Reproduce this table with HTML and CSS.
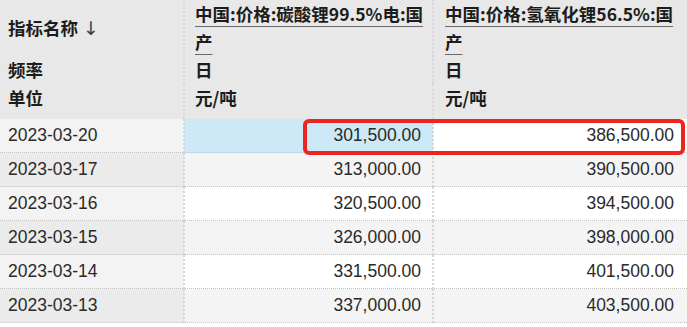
FILE: index.html
```html
<!DOCTYPE html>
<html lang="zh">
<head>
<meta charset="utf-8">
<link rel="stylesheet" href="styles.css">
</head>
<body>
<div class="wrap">
  <table class="grid">
    <colgroup>
      <col class="c1">
      <col class="c2">
      <col class="c3">
    </colgroup>
    <thead>
      <tr class="h-title">
        <th class="lbl">指标名称 <span class="arrow">↓</span></th>
        <th class="col"><span class="link">中国:价格:碳酸锂99.5%电:国产</span></th>
        <th class="col"><span class="link">中国:价格:氢氧化锂56.5%:国产</span></th>
      </tr>
      <tr class="h-freq">
        <th class="lbl">频率</th>
        <th class="col">日</th>
        <th class="col">日</th>
      </tr>
      <tr class="h-unit">
        <th class="lbl">单位</th>
        <th class="col">元/吨</th>
        <th class="col">元/吨</th>
      </tr>
    </thead>
    <tbody>
      <tr><td class="date">2023-03-20</td><td class="num sel">301,500.00</td><td class="num">386,500.00</td></tr>
      <tr><td class="date">2023-03-17</td><td class="num">313,000.00</td><td class="num">390,500.00</td></tr>
      <tr><td class="date">2023-03-16</td><td class="num">320,500.00</td><td class="num">394,500.00</td></tr>
      <tr><td class="date">2023-03-15</td><td class="num">326,000.00</td><td class="num">398,000.00</td></tr>
      <tr><td class="date">2023-03-14</td><td class="num">331,500.00</td><td class="num">401,500.00</td></tr>
      <tr><td class="date">2023-03-13</td><td class="num">337,000.00</td><td class="num">403,500.00</td></tr>
    </tbody>
  </table>
  <div class="mark"></div>
</div>
</body>
</html>
```
FILE: styles.css
```css
html, body {
  margin: 0;
  padding: 0;
  background: #ffffff;
}
.wrap {
  position: relative;
  width: 687px;
  height: 327px;
  overflow: hidden;
}
.grid {
  border-collapse: collapse;
  table-layout: fixed;
  width: 687px;
}
.c1 { width: 184px; }
.c2 { width: 249px; }
.c3 { width: 254px; }

thead th {
  background: #e8e8e8;
  font-family: "Noto Sans CJK SC", sans-serif;
  font-weight: 700;
  font-size: 17.5px;
  color: #1c1c1c;
  text-align: left;
  vertical-align: top;
  padding: 0;
  line-height: 28px;
}
thead th + th {
  border-left: 2px dotted #d9d9d9;
}
thead th.lbl { padding-left: 8px; }
thead th.col { padding-left: 10px; padding-right: 8px; }
thead th:nth-child(3).col { padding-left: 11px; }

.h-title th { height: 56px; }
.h-title th.lbl { vertical-align: middle; }
.h-freq th { height: 28px; }
.h-freq th.lbl { vertical-align: middle; line-height: 24px; }
.h-unit th { height: 35px; }

.link {
  text-decoration: underline;
  text-decoration-color: #6a6a6a;
  text-decoration-thickness: 1px;
  text-underline-offset: 5px;
}
.arrow {
  font-family: "DejaVu Sans", sans-serif;
  font-weight: 400;
  color: #444;
  font-size: 19px;
  margin-left: 1px;
}

tbody td {
  font-family: "Liberation Sans", Arial, sans-serif;
  font-size: 17.5px;
  color: #2a2a2a;
  height: 33px;
  padding: 0;
  border-bottom: 1px dotted #c4c4c4;
  background: #ffffff;
}
tbody td + td {
  border-left: 2px dotted #d4d4d4;
}
tbody tr:nth-child(even) td { background: #f4f4f5; }
tbody td.date {
  padding-left: 8px;
  background: #f3f3f3;
}
tbody tr:nth-child(even) td.date { background: #ebebeb; }
tbody td.num {
  text-align: right;
  padding-right: 11px;
}
tbody td:nth-child(3).num { padding-right: 13px; }
tbody td.sel { background: #cde9f7; }

.mark {
  position: absolute;
  left: 303px;
  top: 119px;
  width: 374px;
  height: 28px;
  border: 4px solid #ee2420;
  border-radius: 6px;
}
```
